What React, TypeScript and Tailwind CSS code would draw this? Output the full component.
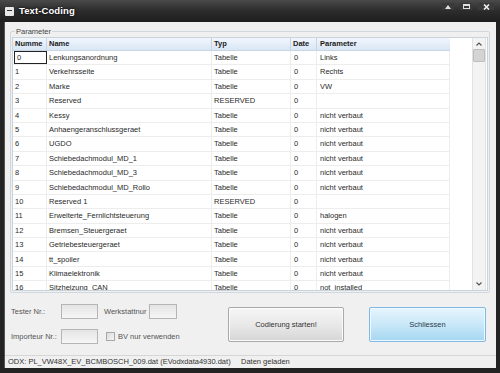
import React from 'react';

const rows: [string, string, string, string, string][] = [
  ['0', 'Lenkungsanordnung', 'Tabelle', '0', 'Links'],
  ['1', 'Verkehrsseite', 'Tabelle', '0', 'Rechts'],
  ['2', 'Marke', 'Tabelle', '0', 'VW'],
  ['3', 'Reserved', 'RESERVED', '0', ''],
  ['4', 'Kessy', 'Tabelle', '0', 'nicht verbaut'],
  ['5', 'Anhaengeranschlussgeraet', 'Tabelle', '0', 'nicht verbaut'],
  ['6', 'UGDO', 'Tabelle', '0', 'nicht verbaut'],
  ['7', 'Schiebedachmodul_MD_1', 'Tabelle', '0', 'nicht verbaut'],
  ['8', 'Schiebedachmodul_MD_3', 'Tabelle', '0', 'nicht verbaut'],
  ['9', 'Schiebedachmodul_MD_Rollo', 'Tabelle', '0', 'nicht verbaut'],
  ['10', 'Reserved 1', 'RESERVED', '0', ''],
  ['11', 'Erweiterte_Fernlichtsteuerung', 'Tabelle', '0', 'halogen'],
  ['12', 'Bremsen_Steuergeraet', 'Tabelle', '0', 'nicht verbaut'],
  ['13', 'Getriebesteuergeraet', 'Tabelle', '0', 'nicht verbaut'],
  ['14', 'tt_spoiler', 'Tabelle', '0', 'nicht verbaut'],
  ['15', 'Klimaelektronik', 'Tabelle', '0', 'nicht verbaut'],
  ['16', 'Sitzheizung_CAN', 'Tabelle', '0', 'not_installed'],
];

const cols = 'grid grid-cols-[34px_165px_79px_26px_133px]';

export default function App() {
  return (
    <div className="w-[500px] h-[373px] bg-[#232323] flex flex-col overflow-hidden text-[7.5px] text-[#2a2a2a]" style={{ fontFamily: '"Liberation Sans", Arial, sans-serif' }}>
      {/* title bar */}
      <div className="h-[22px] shrink-0 flex items-center px-[5px] bg-gradient-to-b from-[#4a4a4a] via-[#2c2c2c] to-[#1e1e1e]">
        <div className="w-[9px] h-[9px] bg-[#e8e8e8] rounded-[1px] flex items-start justify-center pt-[3px]">
          <div className="w-[5px] h-[1px] bg-[#333]" />
        </div>
        <span className="ml-[5px] text-[9.5px] font-bold text-white tracking-[0.1px]" style={{ textShadow: '0 0 3px #000' }}>Text-Coding</span>
        <div className="ml-auto flex items-center gap-[6px] self-start mt-[3px] mr-[1px]">
          <div className="w-[12px] h-[7px] bg-[#3a3a3a] flex items-center justify-center">
            <svg width="6" height="4" viewBox="0 0 6 4"><path d="M0 4 L3 0 L6 4 Z" fill="#e0e0e0" /></svg>
          </div>
          <div className="w-[12px] h-[7px] bg-[#3a3a3a] flex items-center justify-center">
            <div className="w-[7px] h-[5px] border border-[#e0e0e0] border-t-2" />
          </div>
          <div className="w-[16px] h-[7px] bg-[#3a3a3a] flex items-center justify-center">
            <svg width="7" height="6" viewBox="0 0 7 6"><path d="M1 0.5 L6 5.5 M6 0.5 L1 5.5" stroke="#f0f0f0" strokeWidth="1.6" /></svg>
          </div>
        </div>
      </div>

      {/* client */}
      <div className="mx-[4px] mb-[5px] flex-1 bg-[#f0f0f0] flex flex-col border-l border-[#555]">
        <fieldset className="mt-[5px] ml-[5px] w-[480px] h-[266px] border border-[#d0d7de] rounded-[2px] px-[1px] pb-[1px]">
          <legend className="ml-[3px] px-[1px] leading-[9px] text-[#444]">Parameter</legend>
          <div className="mt-[1px] h-[254px] bg-white border border-[#c9d3dc] flex overflow-hidden">
            <div className="flex flex-col w-[437px]">
              <div className={`${cols} h-[13px] shrink-0 bg-gradient-to-b from-[#f1f6fc] to-[#d9e6f5] font-bold text-[#1b1b1b] border-b border-[#c7d5e6]`}>
                <div className="pl-[2px] flex items-center border-r border-[#c7d5e6]">Numme</div>
                <div className="pl-[2px] flex items-center border-r border-[#c7d5e6]">Name</div>
                <div className="pl-[2px] flex items-center border-r border-[#c7d5e6]">Typ</div>
                <div className="pl-[2px] flex items-center border-r border-[#c7d5e6]">Date</div>
                <div className="pl-[3px] flex items-center">Parameter</div>
              </div>
              {rows.map((r, i) => (
                <div key={r[0]} className={`${cols} h-[14.4px] shrink-0 border-b border-[#ededed]`}>
                  <div className={`pl-[2px] flex items-center ${i === 0 ? 'border border-[#222] ml-[1px]' : 'border-r border-[#ededed]'}`}>{r[0]}</div>
                  <div className="pl-[2px] flex items-center border-r border-[#ededed]">{r[1]}</div>
                  <div className="pl-[2px] flex items-center border-r border-[#ededed]">{r[2]}</div>
                  <div className="pl-[3px] flex items-center border-r border-[#ededed]">{r[3]}</div>
                  <div className="pl-[3px] flex items-center border-r border-[#ededed]">{r[4]}</div>
                </div>
              ))}
            </div>
            <div className="flex-1" />
            <div className="w-[14px] mr-[1px] bg-[#f3f3f3] border-l border-r border-[#e2e2e2] flex flex-col items-center">
              <div className="h-[11px] flex items-center">
                <svg width="6" height="4" viewBox="0 0 6 4"><path d="M0.5 3.5 L3 1 L5.5 3.5" stroke="#555" strokeWidth="1.2" fill="none" /></svg>
              </div>
              <div className="w-[12px] h-[13px] bg-[#d4d4d4] border border-[#bdbdbd] rounded-[1px]" />
              <div className="flex-1" />
              <div className="h-[12px] flex items-center">
                <svg width="6" height="4" viewBox="0 0 6 4"><path d="M0.5 0.5 L3 3 L5.5 0.5" stroke="#555" strokeWidth="1.2" fill="none" /></svg>
              </div>
            </div>
          </div>
        </fieldset>

        {/* controls */}
        <div className="flex-1 flex">
          <div className="ml-[6px] pt-[11px] flex flex-col gap-[10px] w-[200px]">
            <div className="flex items-center h-[15px]">
              <span className="w-[50px] text-[#555]">Tester Nr.:</span>
              <div className="w-[37px] h-[15px] border border-[#b5b5b5] bg-gradient-to-b from-[#e4e4e4] to-[#f6f6f6]" />
              <span className="ml-[6px] w-[45px] text-[#555]">Werkstattnur</span>
              <div className="w-[28px] h-[15px] border border-[#b5b5b5] bg-gradient-to-b from-[#e4e4e4] to-[#f6f6f6]" />
            </div>
            <div className="flex items-center h-[15px]">
              <span className="w-[50px] text-[#555]">Importeur Nr.:</span>
              <div className="w-[37px] h-[15px] border border-[#b5b5b5] bg-gradient-to-b from-[#e4e4e4] to-[#f6f6f6]" />
              <div className="ml-[8px] w-[9px] h-[9px] border border-[#a8a8a8] bg-gradient-to-br from-[#dcdcdc] to-[#f4f4f4]" />
              <span className="ml-[3px] text-[#555]">BV nur verwenden</span>
            </div>
          </div>
          <div className="ml-[17px] mt-[14px] w-[116px] h-[35px] rounded-[2px] border border-[#a9a9a9] bg-gradient-to-b from-[#f6f6f6] via-[#e9e9e9] to-[#d6d6d6] flex items-center justify-center text-[#333] shadow-[inset_0_0_0_1px_#fbfbfb]">
            Codierung starten!
          </div>
          <div className="ml-[25px] mt-[14px] w-[117px] h-[35px] rounded-[2px] border border-[#7fb8e0] bg-gradient-to-b from-[#e6f5fd] via-[#c9e8f8] to-[#a4d6f1] flex items-center justify-center text-[#2a3a4a] shadow-[inset_0_0_0_1px_#eef8fe]">
            Schliessen
          </div>
        </div>

        {/* status */}
        <div className="h-[13px] shrink-0 border-t border-[#d6d6d6] flex items-center text-[#333]">
          <span className="ml-[3px] w-[233px]">ODX: PL_VW48X_EV_BCMBOSCH_009.dat (EVodxdata4930.dat)</span>
          <span>Daten geladen</span>
        </div>
      </div>
    </div>
  );
}
